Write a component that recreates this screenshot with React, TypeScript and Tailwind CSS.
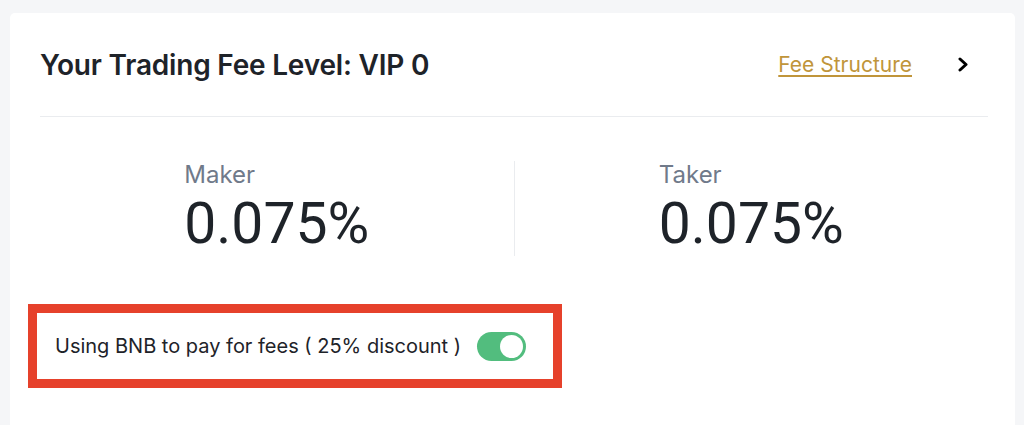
import React from "react";

export default function App() {
  return (
    <div className="w-[1024px] h-[425px] overflow-hidden bg-[#f5f6f8] pt-[13px] pl-[10px]" style={{ fontFamily: "Inter, 'Noto Sans', sans-serif" }}>
      <div className="w-[1005px] h-[430px] bg-white rounded-[5px] pl-[30px] pr-[27px]">
        <div className="h-[104px] border-b border-[#eaecef] flex items-center justify-between">
          <h1 className="text-[28px] font-semibold text-[#1e2329] tracking-[-0.2px]">Your Trading Fee Level: VIP 0</h1>
          <div className="flex items-center pr-[20px]">
            <a className="text-[21px] text-[#c0953a] underline underline-offset-[3px] decoration-[1.5px]">Fee Structure</a>
            <svg className="ml-[46px]" width="10" height="15" viewBox="0 0 10 15" fill="none">
              <polyline points="2,2 8,7.5 2,13" stroke="#000" strokeWidth="3" strokeLinecap="round" strokeLinejoin="round" />
            </svg>
          </div>
        </div>
        <div className="flex mt-[44px] h-[95px]">
          <div className="flex-1 flex justify-center">
            <div>
              <div className="text-[24px] leading-[28px] text-[#707a8a]">Maker</div>
              <div className="mt-[6px] text-[57px] leading-[58px] text-[#1e2329]" style={{ fontFamily: "Roboto, sans-serif" }}>0.075%</div>
            </div>
          </div>
          <div className="w-px bg-[#eaecef]" />
          <div className="flex-1 flex justify-center">
            <div>
              <div className="text-[24px] leading-[28px] text-[#707a8a]">Taker</div>
              <div className="mt-[6px] text-[57px] leading-[58px] text-[#1e2329]" style={{ fontFamily: "Roboto, sans-serif" }}>0.075%</div>
            </div>
          </div>
        </div>
        <div className="mt-[48px] -ml-[12px] w-[534px] h-[84px] border-[9px] border-[#e6412b] flex items-center pl-[18px]">
          <span className="text-[20px] text-[#1e2329]">Using BNB to pay for fees ( 25% discount )</span>
          <div className="ml-[16px] w-[49px] h-[29px] rounded-full bg-[#52bd7e] flex items-center justify-end pr-[3px]">
            <div className="w-[23px] h-[23px] rounded-full bg-white" />
          </div>
        </div>
      </div>
    </div>
  );
}
